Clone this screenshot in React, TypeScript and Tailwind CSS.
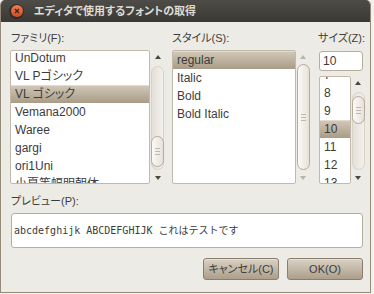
import React from 'react';

const uiFont = "font-['Liberation_Sans','Noto_Sans_CJK_JP',sans-serif] [font-feature-settings:'palt']";

function Arrow({ up, dim }: { up?: boolean; dim?: boolean }) {
  return (
    <svg width="6" height="4" viewBox="0 0 6 4" className={up ? '' : 'rotate-180'}>
      <polygon points="3,0 6,4 0,4" fill={dim ? '#b8b2a8' : '#4a4740'} />
    </svg>
  );
}

function Thumb({ className }: { className: string }) {
  return (
    <div
      className={`flex flex-col items-center justify-center gap-[2px] rounded-full border border-[#b6ab99] bg-gradient-to-r from-[#fbfaf8] to-[#e6e1d9] ${className}`}
    >
      <div className="h-px w-[5px] bg-[#c2b9ab]" />
      <div className="h-px w-[5px] bg-[#c2b9ab]" />
      <div className="h-px w-[5px] bg-[#c2b9ab]" />
    </div>
  );
}

function Row({ text, selected }: { text: string; selected?: boolean }) {
  return (
    <div
      className={`flex h-[18px] shrink-0 items-center whitespace-nowrap pl-[4px] ${
        selected ? 'bg-gradient-to-b from-[#d3c9b9] to-[#a99c87] shadow-[inset_0_1px_0_#e3dbcf]' : ''
      }`}
    >
      {text}
    </div>
  );
}

export default function App() {
  const families = ['UnDotum', 'VL Pゴシック', 'VL ゴシック', 'Vemana2000', 'Waree', 'gargi', 'ori1Uni', '小夏等幅明朝体'];
  const styles = ['regular', 'Italic', 'Bold', 'Bold Italic'];
  const sizes = ['7', '8', '9', '10', '11', '12', '13'];

  return (
    <div className={`h-[294px] w-[374px] overflow-hidden bg-[#f3f1ed] text-[11px] text-[#3c3c3c] ${uiFont}`}>
      <div className="flex h-[293px] w-[371px] flex-col overflow-hidden rounded-t-[5px] border-x border-b border-[#95897a] bg-[#edebe6]">
        {/* title bar */}
        <div className="flex h-[22px] shrink-0 items-center bg-gradient-to-b from-[#4e4c47] to-[#3a3935] pl-[8px]">
          <div className="flex h-[15px] w-[15px] items-center justify-center rounded-full bg-[#2e2d2a]">
            <div className="flex h-[12px] w-[12px] items-center justify-center rounded-full bg-gradient-to-b from-[#f27d52] to-[#d5491c]">
              <svg width="6" height="6" viewBox="0 0 6 6">
                <path d="M1 1 L5 5 M5 1 L1 5" stroke="#3a2418" strokeWidth="1.3" />
              </svg>
            </div>
          </div>
          <div className="ml-[10px] text-[11px] font-bold text-[#dfdbd2]">エディタで使用するフォントの取得</div>
        </div>

        {/* body */}
        <div className="flex flex-1 flex-col pl-[9px] pr-[7px] pt-[9px]">
          <div className="flex">
            {/* family */}
            <div className="flex w-[155px] flex-col">
              <div className="h-[14px] pl-px leading-[14px]">ファミリ(F):</div>
              <div className="mt-[5px] flex h-[134px]">
                <div className="flex w-[140px] flex-col overflow-hidden rounded-[2px] border border-[#c3b9aa] bg-white text-[12px]">
                  <div className="mt-[-2px] flex flex-col">
                    {families.map((f) => (
                      <Row key={f} text={f} selected={f === 'VL ゴシック'} />
                    ))}
                  </div>
                </div>
                <div className="flex w-[15px] flex-col items-center">
                  <div className="flex h-[14px] items-center justify-center">
                    <Arrow up />
                  </div>
                  <div className="relative mt-[2px] mb-[2px] w-[13px] flex-1 rounded-full border border-[#d8d1c6] bg-gradient-to-r from-[#e4dfd7] to-[#f3f1ed]">
                    <div className="absolute left-[-1px] top-[69px] h-[31px] w-[13px]">
                      <Thumb className="h-full w-full" />
                    </div>
                  </div>
                  <div className="flex h-[12px] items-center justify-center">
                    <Arrow />
                  </div>
                </div>
              </div>
            </div>

            {/* style */}
            <div className="ml-[7px] flex w-[138px] flex-col">
              <div className="h-[14px] leading-[14px]">スタイル(S):</div>
              <div className="mt-[5px] flex h-[134px]">
                <div className="flex w-[124px] flex-col overflow-hidden rounded-[2px] border border-[#c3b9aa] bg-white text-[12px]">
                  {styles.map((s) => (
                    <Row key={s} text={s} selected={s === 'regular'} />
                  ))}
                </div>
                <div className="flex w-[14px] flex-col items-center">
                  <div className="flex h-[14px] items-center justify-center">
                    <Arrow up dim />
                  </div>
                  <div className="mb-[2px] flex w-[13px] flex-1 flex-col">
                    <Thumb className="flex-1" />
                  </div>
                  <div className="flex h-[12px] items-center justify-center">
                    <Arrow dim />
                  </div>
                </div>
              </div>
            </div>

            {/* size */}
            <div className="ml-[8px] flex w-[47px] flex-col">
              <div className="h-[14px] leading-[14px]">サイズ(Z):</div>
              <div className="ml-px mt-[6px] flex h-[20px] w-[44px] items-center rounded-[3px] border border-[#b9ae9d] bg-white pl-[3px] text-[12px]">
                10
              </div>
              <div className="ml-px mt-[5px] flex h-[108px]">
                <div className="flex w-[32px] flex-col overflow-hidden rounded-[2px] border border-[#c3b9aa] bg-white">
                  <div className="mt-[-11px] flex flex-col text-[12px]">
                    {sizes.map((s) => (
                      <Row key={s} text={s} selected={s === '10'} />
                    ))}
                  </div>
                </div>
                <div className="flex w-[14px] flex-col items-center">
                  <div className="flex h-[14px] items-center justify-center">
                    <Arrow up />
                  </div>
                  <div className="relative mb-[2px] mt-[2px] w-[13px] flex-1 rounded-full border border-[#d8d1c6] bg-gradient-to-r from-[#e4dfd7] to-[#f3f1ed]">
                    <div className="absolute left-[-1px] top-[3px] h-[28px] w-[13px]">
                      <Thumb className="h-full w-full" />
                    </div>
                  </div>
                  <div className="flex h-[12px] items-center justify-center">
                    <Arrow />
                  </div>
                </div>
              </div>
            </div>
          </div>

          {/* preview */}
          <div className="mt-[10px] h-[14px] pl-px leading-[14px]">プレビュー(P):</div>
          <div className="ml-px mt-[5px] flex h-[35px] w-[352px] items-center rounded-[3px] border border-[#b9ae9d] bg-white pl-[2px] font-['DejaVu_Sans_Mono','Noto_Sans_CJK_JP',monospace] text-[10px] [font-feature-settings:normal]">
            abcdefghijk ABCDEFGHIJK これはテストです
          </div>

          {/* buttons */}
          <div className="mt-[10px] flex w-[353px] justify-end gap-[8px]">
            <button className="h-[22px] w-[76px] rounded-[3px] border border-[#8a7e6c] bg-gradient-to-b from-[#d9d2c5] to-[#ac9f8b] text-[11px] text-[#3c3c3c] shadow-[inset_0_1px_0_#e6e0d6]">
              キャンセル(C)
            </button>
            <button className="h-[22px] w-[76px] rounded-[3px] border border-[#8a7e6c] bg-gradient-to-b from-[#d9d2c5] to-[#ac9f8b] text-[11px] text-[#3c3c3c] shadow-[inset_0_1px_0_#e6e0d6]">
              OK(O)
            </button>
          </div>
        </div>
      </div>
    </div>
  );
}
